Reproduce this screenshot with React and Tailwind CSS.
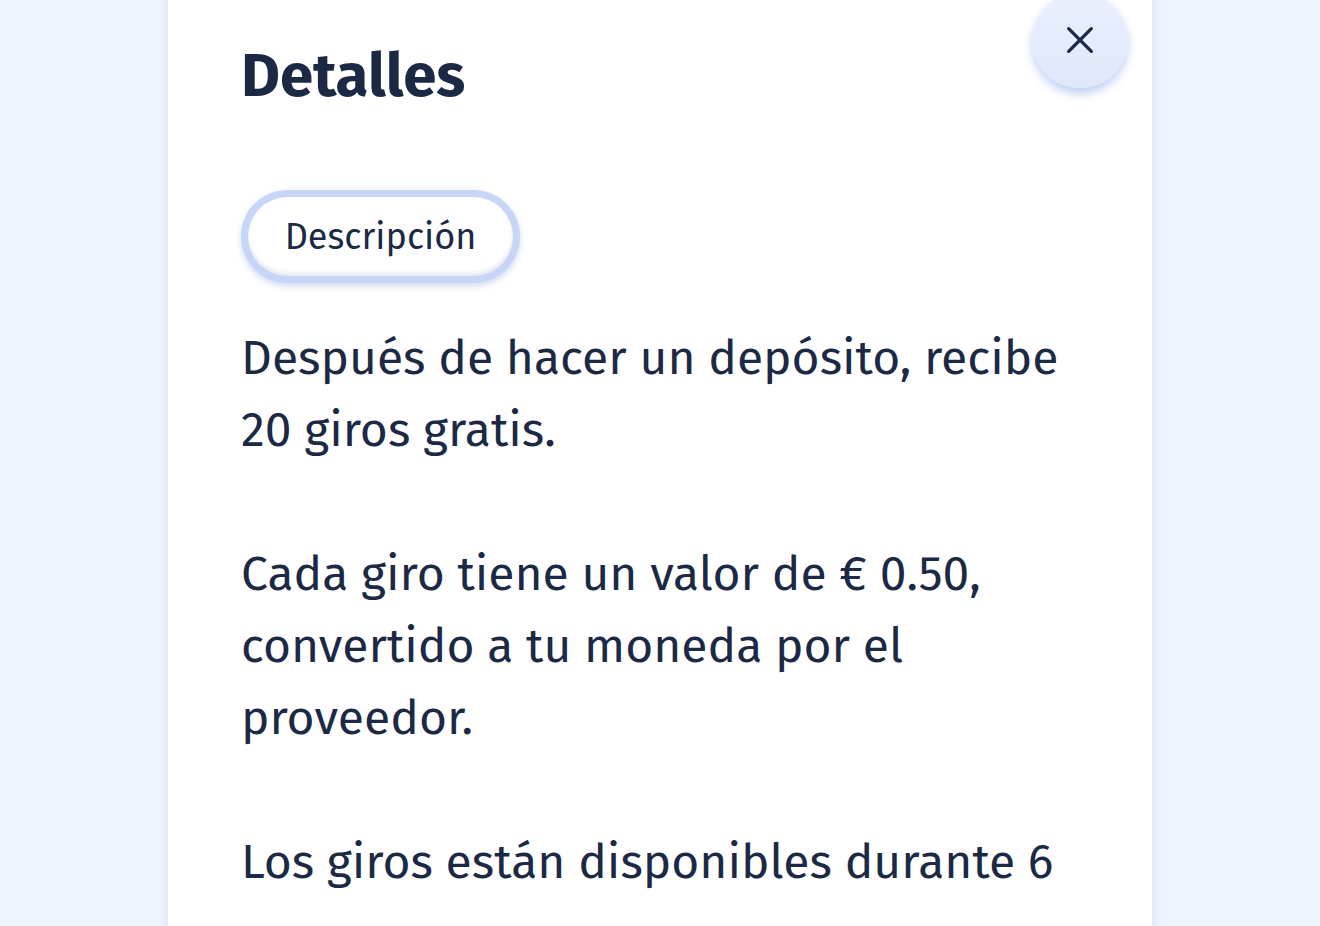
export default function App() {
  const font = { fontFamily: '"Fira Sans", "Noto Sans", sans-serif' }
  return (
    <div className="h-[926px] bg-[#eef3fe] overflow-hidden" style={font}>
      <div className="relative mx-auto mt-[-24px] w-[984px] min-h-[1000px] rounded-[28px] bg-white px-[73px] pt-[64px] shadow-[0_0_12px_rgba(120,140,200,0.18)]">
        <button className="absolute right-[24px] top-[16px] flex h-[96px] w-[96px] items-center justify-center rounded-full bg-gradient-to-b from-[#eaf0fd] to-[#dfe7fb] shadow-[0_6px_10px_rgba(120,150,225,0.45)]">
          <svg width="34" height="34" viewBox="0 0 24 24" fill="none" stroke="#1b2945" strokeWidth="2.3" strokeLinecap="round">
            <path d="M4 4l16 16M20 4L4 20" />
          </svg>
        </button>
        <h1 className="text-[60px] font-bold leading-[72px] text-[#1b2945]">Detalles</h1>
        <div className="mt-[78px] inline-flex rounded-full bg-[#c7d6f6] p-[7px] shadow-[0_3px_6px_rgba(120,150,220,0.35)]">
          <div className="flex h-[79px] w-[265px] items-center justify-center rounded-full bg-white shadow-[inset_0_-3px_4px_rgba(150,160,190,0.25)] text-[36px] text-[#1b2945]">
            Descripción
          </div>
        </div>
        <div className="mt-[39px] text-[48px] leading-[72px] text-[#1b2945]">
          <p>Después de hacer un depósito, recibe 20 giros gratis.</p>
          <p className="mt-[72px]">Cada giro tiene un valor de € 0.50, convertido a tu moneda por el proveedor.</p>
          <p className="mt-[72px]">Los giros están disponibles durante 6</p>
        </div>
      </div>
    </div>
  )
}
